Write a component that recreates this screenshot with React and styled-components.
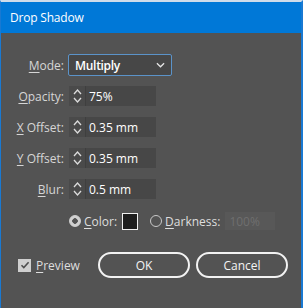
import React from 'react';
import styled, { createGlobalStyle } from 'styled-components';

const GlobalStyle = createGlobalStyle`
    html, body {
        margin: 0;
        padding: 0;
        background: #535353;
    }
    * { box-sizing: border-box; }
`;

const ui = '"Open Sans", "Noto Sans", "Liberation Sans", sans-serif';

const Dialog = () => {
    return (
        <Window>
            <GlobalStyle />
            <TitleBar>Drop Shadow</TitleBar>
            <Body>
                <Form>
                    <Label><u>M</u>ode:</Label>
                    <Select>
                        <span>Multiply</span>
                        <Chevron viewBox="0 0 10 6">
                            <path d="M1 1l4 4 4-4" fill="none" stroke="#e6e6e6" strokeWidth="1.4" />
                        </Chevron>
                    </Select>

                    <Label><u>O</u>pacity:</Label>
                    <Spin value="75%" />

                    <Label><u>X</u> Offset:</Label>
                    <Spin value="0.35 mm" />

                    <Label><u>Y</u> Offset:</Label>
                    <Spin value="0.35 mm" />

                    <Label><u>B</u>lur:</Label>
                    <Spin value="0.5 mm" />
                </Form>

                <RadioRow>
                    <Radio checked />
                    <Text><u>C</u>olor:</Text>
                    <Swatch />
                    <Radio $gap={12} />
                    <Text><u>D</u>arkness:</Text>
                    <DisabledField>100%</DisabledField>
                </RadioRow>

                <Footer>
                    <Check>
                        <CheckBox>
                            <svg width="10" height="10" viewBox="0 0 10 10">
                                <path d="M1.5 5.2l2.3 2.3L8.6 2.2" fill="none" stroke="#4e4e4e" strokeWidth="1.6" />
                            </svg>
                        </CheckBox>
                        <Text><u>P</u>review</Text>
                    </Check>
                    <Button>OK</Button>
                    <Button>Cancel</Button>
                </Footer>
            </Body>
        </Window>
    );
};

const Spin = ({ value }) => (
    <Field>
        <Arrows>
            <svg width="9" height="16" viewBox="0 0 9 16">
                <path d="M1 6l3.5-4L8 6M1 10l3.5 4L8 10" fill="none" stroke="#dcdcdc" strokeWidth="1.3" />
            </svg>
        </Arrows>
        <Value>{value}</Value>
    </Field>
);

export default function App() {
    return <Dialog />;
}

const Window = styled.div`
    width: 303px;
    height: 308px;
    display: flex;
    flex-direction: column;
    border-top: 2px solid #cfdcea;
    border-left: 1px solid #1979d2;
    border-right: 2px solid #1979d2;
    background: #535353;
    font-family: ${ui};
    overflow: hidden;
`;

const TitleBar = styled.div`
    height: 31px;
    flex: none;
    background: #0078d7;
    color: #ffffff;
    font-size: 12px;
    letter-spacing: -0.2px;
    padding: 0 0 0 9px;
    display: flex;
    align-items: center;
`;

const Body = styled.div`
    flex: 1;
    display: flex;
    flex-direction: column;
    padding-top: 22px;
`;

const Form = styled.div`
    display: grid;
    grid-template-columns: 63px auto;
    grid-auto-rows: 20px;
    row-gap: 11px;
    column-gap: 4px;
    align-items: center;
    justify-items: start;
`;

const Label = styled.div`
    justify-self: end;
    color: #d6d6d6;
    font-size: 12px;
    white-space: nowrap;
    u { text-underline-offset: 2px; }
`;

const Select = styled.div`
    width: 104px;
    height: 22px;
    display: flex;
    align-items: center;
    justify-content: space-between;
    padding: 0 6px 0 6px;
    background: #474747;
    border: 1px solid #5b93c9;
    border-radius: 2px;
    color: #ffffff;
    font-size: 12px;
    font-weight: 600;
    letter-spacing: -0.3px;
`;

const Chevron = styled.svg`
    width: 9px;
    height: 6px;
`;

const Field = styled.div`
    display: flex;
    height: 20px;
    margin-left: 1px;
`;

const Arrows = styled.div`
    width: 17px;
    display: flex;
    align-items: center;
    justify-content: center;
    background: #4a4a4a;
    border-right: 1px solid #3f3f3f;
`;

const Value = styled.div`
    width: 70px;
    display: flex;
    align-items: center;
    padding-left: 3px;
    background: #474747;
    color: #ffffff;
    font-size: 12px;
`;

const RadioRow = styled.div`
    display: flex;
    align-items: center;
    height: 20px;
    margin-top: 12px;
    padding-left: 68px;
`;

const Radio = styled.span`
    width: 12px;
    height: 12px;
    border-radius: 50%;
    flex: none;
    border: 1px solid ${p => (p.checked ? '#d0d0d0' : '#c8c8c8')};
    background: ${p => (p.checked ? 'radial-gradient(circle, #535353 0 2.5px, #d0d0d0 3px)' : 'transparent')};
    margin-left: ${p => p.$gap || 0}px;
    margin-right: 3px;
`;

const Text = styled.span`
    color: #dedede;
    font-size: 12px;
    white-space: nowrap;
    u { text-underline-offset: 2px; }
`;

const Swatch = styled.span`
    width: 16px;
    height: 17px;
    margin-left: 5px;
    background: #1e1e1e;
    border: 1px solid #f0f0f0;
`;

const DisabledField = styled.div`
    width: 50px;
    height: 18px;
    margin-left: 5px;
    display: flex;
    align-items: center;
    padding-left: 4px;
    background: #585858;
    color: #6f6f6f;
    font-size: 12px;
`;

const Footer = styled.div`
    display: flex;
    align-items: center;
    margin-top: 21px;
    padding-left: 17px;
`;

const Check = styled.div`
    display: flex;
    align-items: center;
    gap: 5px;
    width: 80px;
`;

const CheckBox = styled.span`
    width: 13px;
    height: 13px;
    background: #cfcfcf;
    display: flex;
    align-items: center;
    justify-content: center;
`;

const Button = styled.button`
    width: 92px;
    height: 26px;
    margin-right: 6px;
    border: 2px solid #f2f2f2;
    border-radius: 13px;
    background: transparent;
    color: #f4f4f4;
    font-family: ${ui};
    font-size: 12px;
    padding: 0;
`;
